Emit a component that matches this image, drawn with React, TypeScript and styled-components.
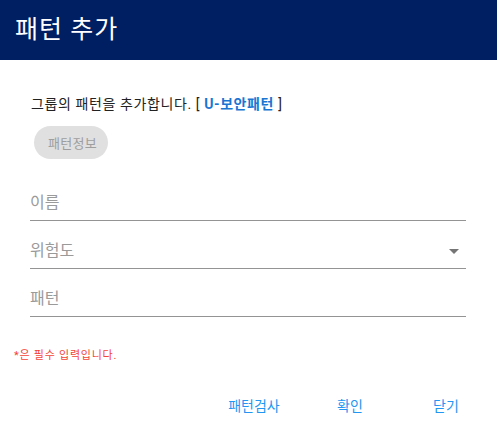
import React from "react";
import styled, { createGlobalStyle } from "styled-components";

const Global = createGlobalStyle`
  html, body { margin: 0; padding: 0; background: #fff; }
  body { font-family: Roboto, "Noto Sans CJK KR", sans-serif; }
`;

const Dialog = styled.div`
  width: 497px;
  height: 428px;
  background: #fff;
  display: flex;
  flex-direction: column;
  overflow: hidden;
`;

const Header = styled.div`
  height: 60px;
  flex: none;
  background: #001e62;
  display: flex;
  align-items: center;
  padding-left: 15px;
  box-sizing: border-box;
`;

const Title = styled.h2`
  margin: -2px 0 0;
  color: #fff;
  font-size: 25px;
  font-weight: 400;
  letter-spacing: 1px;
  font-family: Roboto, "Noto Sans CJK KR", sans-serif;
  line-height: 1;
`;

const Body = styled.div`
  padding: 32px 31px 0 30px;
  display: flex;
  flex-direction: column;
`;

const Intro = styled.p`
  margin: 0 0 0 1px;
  font-size: 14px;
  letter-spacing: 0.6px;
  line-height: 24px;
  color: #222;
`;

const Group = styled.span`
  color: #1976d2;
  font-weight: 700;
`;

const Chip = styled.span`
  align-self: flex-start;
  margin: 10px 0 0 4px;
  height: 33px;
  padding: 0 11px 0 14px;
  border-radius: 17px;
  background: #e0e0e0;
  color: #9e9e9e;
  font-size: 13px;
  letter-spacing: 0.3px;
  display: inline-flex;
  align-items: center;
`;

const Fields = styled.div`
  margin-top: 25px;
  display: flex;
  flex-direction: column;
  gap: 11px;
`;

const Field = styled.div`
  height: 37px;
  border-bottom: 1px solid #949494;
  display: flex;
  align-items: flex-start;
  justify-content: space-between;
  box-sizing: border-box;
  padding-top: 7px;
`;

const Placeholder = styled.span`
  font-size: 16px;
  line-height: 24px;
  color: #9a9a9a;
`;

const Arrow = styled.svg`
  width: 24px;
  height: 24px;
  fill: #757575;
`;

const Required = styled.p`
  margin: 31px 0 0 14px;
  font-size: 11px;
  letter-spacing: 0.75px;
  color: #f44336;
  line-height: 16px;
`;

const Actions = styled.div`
  display: grid;
  grid-template-columns: repeat(3, 96px);
  justify-content: end;
  margin-top: 25px;
  padding-right: 3px;
`;

const Button = styled.button`
  border: 0;
  background: transparent;
  color: #2196f3;
  font-size: 14px;
  font-family: Roboto, "Noto Sans CJK KR", sans-serif;
  height: 32px;
  padding: 0;
  cursor: pointer;
`;

export default function App() {
  return (
    <>
      <Global />
      <Dialog>
        <Header>
          <Title>패턴 추가</Title>
        </Header>
        <Body>
          <Intro>
            그룹의 패턴을 추가합니다. [ <Group>U-보안패턴</Group> ]
          </Intro>
          <Chip>패턴정보</Chip>
          <Fields>
            <Field>
              <Placeholder>이름</Placeholder>
            </Field>
            <Field>
              <Placeholder>위험도</Placeholder>
              <Arrow viewBox="0 0 24 24">
                <path d="M7 10l5 5 5-5z" />
              </Arrow>
            </Field>
            <Field>
              <Placeholder>패턴</Placeholder>
            </Field>
          </Fields>
        </Body>
        <Required>*은 필수 입력입니다.</Required>
        <Actions>
          <Button>패턴검사</Button>
          <Button>확인</Button>
          <Button>닫기</Button>
        </Actions>
      </Dialog>
    </>
  );
}
